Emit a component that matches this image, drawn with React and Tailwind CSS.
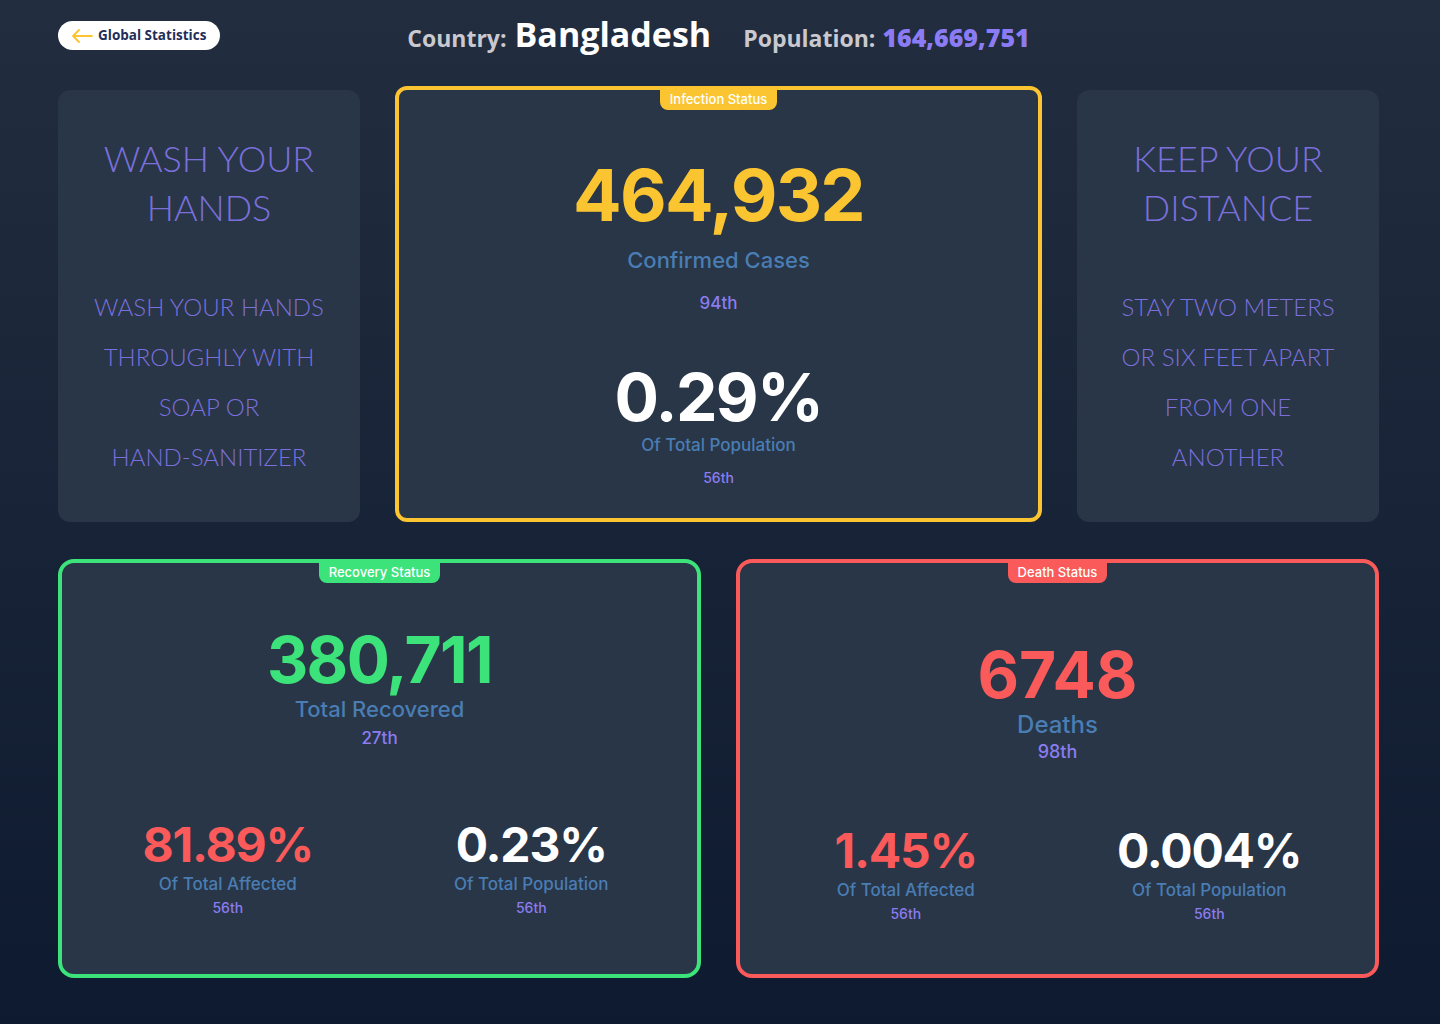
import React from 'react';

const num = { fontFamily: 'Inter, "Open Sans", sans-serif' };
const body = { fontFamily: 'Inter, "Open Sans", sans-serif' };
const head = { fontFamily: '"Open Sans", "Noto Sans", sans-serif' };
const thin = { fontFamily: 'Lato, "Open Sans", sans-serif' };

const Badge = ({ label, color }) => (
  <div className="absolute -top-[2px] left-0 right-0 flex justify-center">
    <span
      className={`${color} rounded-b-lg px-[10px] text-[13px] leading-[22px] font-medium text-white`}
      style={body}
    >
      {label}
    </span>
  </div>
);

const TipCard = ({ title, lines }) => (
  <div className="h-[432px] rounded-xl bg-[#283647] pt-[44px] text-center text-[#7b6fdc]" style={thin}>
    {title.map((t) => (
      <div key={t} className="text-[36px] leading-[49px] font-light">{t}</div>
    ))}
    <div className="mt-[50px]">
      {lines.map((l) => (
        <div key={l} className="text-[24px] leading-[50px] font-light">{l}</div>
      ))}
    </div>
  </div>
);

const SubStat = ({ value, valueColor, label, rank }) => (
  <div className="flex flex-col items-center">
    <div className={`text-[48px] leading-[54px] font-bold tracking-tight ${valueColor}`} style={num}>{value}</div>
    <div className="text-[17px] leading-[24px] font-medium text-[#4a7db3]" style={body}>{label}</div>
    <div className="mt-[2px] text-[14px] leading-[20px] font-medium text-[#8b7cf0]" style={body}>{rank}</div>
  </div>
);

export default function App() {
  return (
    <div className="min-h-screen bg-linear-to-b from-[#222d3f] to-[#0e1a2f] pl-[58px] pr-[61px] pt-[21px] pb-[46px]">
      {/* header */}
      <div className="grid grid-rows-[29px] grid-cols-[1fr_auto_1fr] items-center">
        <button className="justify-self-start flex h-[29px] items-center gap-[5px] rounded-full bg-white pl-[13px] pr-[14px]">
          <svg width="22" height="14" viewBox="0 0 22 14" fill="none" stroke="#fbc531" strokeWidth="1.8" strokeLinecap="round" strokeLinejoin="round">
            <path d="M21 7H2M8 1L2 7l6 6" />
          </svg>
          <span className="text-[13.5px] font-bold text-[#1f2d5a]" style={head}>Global Statistics</span>
        </button>
        <div className="flex items-baseline gap-[32px] leading-none -mt-[3px]" style={head}>
          <div className="flex items-baseline gap-[8px]">
            <span className="text-[23px] font-bold text-[#c9c9cf]">Country:</span>
            <span className="text-[34px] font-bold text-white">Bangladesh</span>
          </div>
          <div className="flex items-baseline gap-[7px]">
            <span className="text-[23px] font-bold text-[#c9c9cf]">Population:</span>
            <span className="text-[25px] font-extrabold text-[#8b7cf6]">164,669,751</span>
          </div>
        </div>
        <div />
      </div>

      {/* top row */}
      <div className="mt-[36px] grid grid-cols-[302px_1fr_302px] items-end gap-[35px]">
        <TipCard
          title={['WASH YOUR', 'HANDS']}
          lines={['WASH YOUR HANDS', 'THROUGHLY WITH', 'SOAP OR', 'HAND-SANITIZER']}
        />
        <div className="relative h-[436px] rounded-xl border-4 border-[#fbc531] bg-[#283647] text-center">
          <Badge label="Infection Status" color="bg-[#fbc531]" />
          <div className="pt-[65px] text-[72px] leading-[80px] font-bold tracking-tight text-[#fbc531]" style={num}>464,932</div>
          <div className="mt-[10px] text-[22px] leading-[30px] font-medium text-[#4a7db3]" style={body}>Confirmed Cases</div>
          <div className="mt-[16px] text-[17px] leading-[24px] font-medium text-[#8b7cf0]" style={body}>94th</div>
          <div className="mt-[45px] text-[66px] leading-[74px] font-bold tracking-tight text-white" style={num}>0.29%</div>
          <div className="text-[17px] leading-[22px] font-medium text-[#4a7db3]" style={body}>Of Total Population</div>
          <div className="mt-[12px] text-[14px] leading-[20px] font-medium text-[#8b7cf0]" style={body}>56th</div>
        </div>
        <TipCard
          title={['KEEP YOUR', 'DISTANCE']}
          lines={['STAY TWO METERS', 'OR SIX FEET APART', 'FROM ONE', 'ANOTHER']}
        />
      </div>

      {/* bottom row */}
      <div className="mt-[37px] grid grid-cols-2 gap-[35px]">
        <div className="relative h-[419px] rounded-2xl border-4 border-[#3ce27a] bg-[#283647] text-center">
          <Badge label="Recovery Status" color="bg-[#3ce27a]" />
          <div className="pt-[63px] text-[64px] leading-[68px] font-bold tracking-tight text-[#3ce27a]" style={num}>380,711</div>
          <div className="mt-[1px] text-[22px] leading-[28px] font-medium text-[#4a7db3]" style={body}>Total Recovered</div>
          <div className="mt-[3px] text-[17px] leading-[24px] font-medium text-[#8b7cf0]" style={body}>27th</div>
          <div className="mt-[68px] grid grid-cols-2 px-[14px]">
            <SubStat value="81.89%" valueColor="text-[#fa5a5a]" label="Of Total Affected" rank="56th" />
            <SubStat value="0.23%" valueColor="text-white" label="Of Total Population" rank="56th" />
          </div>
        </div>
        <div className="relative h-[419px] rounded-2xl border-4 border-[#fa5a5a] bg-[#283647] text-center">
          <Badge label="Death Status" color="bg-[#fa5a5a]" />
          <div className="pt-[78px] text-[64px] leading-[68px] font-bold text-[#fa5a5a]" style={num}>6748</div>
          <div className="mt-[2px] text-[24px] leading-[28px] font-medium text-[#4a7db3]" style={body}>Deaths</div>
          <div className="mt-[1px] text-[18px] leading-[24px] font-medium text-[#8b7cf0]" style={body}>98th</div>
          <div className="mt-[60px] grid grid-cols-2 px-[14px]">
            <SubStat value="1.45%" valueColor="text-[#fa5a5a]" label="Of Total Affected" rank="56th" />
            <SubStat value="0.004%" valueColor="text-white" label="Of Total Population" rank="56th" />
          </div>
        </div>
      </div>
    </div>
  );
}
